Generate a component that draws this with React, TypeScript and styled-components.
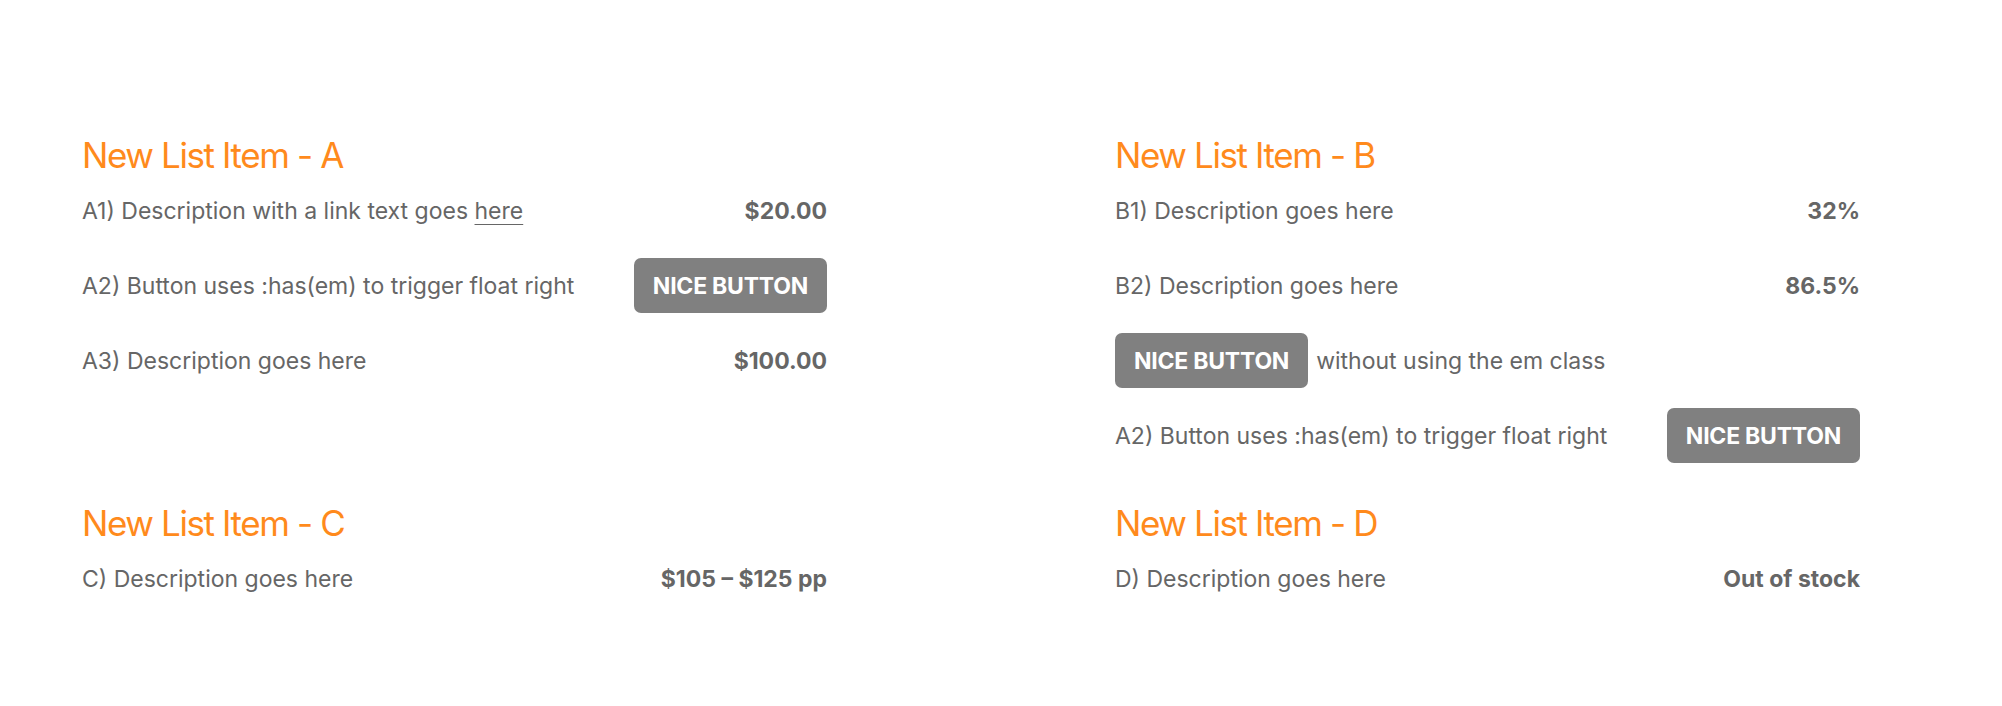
import React from 'react';
import styled, { createGlobalStyle } from 'styled-components';

const GlobalStyle = createGlobalStyle`
  html, body {
    margin: 0;
    padding: 0;
    background: #fff;
  }
  body {
    font-family: Inter, "Liberation Sans", sans-serif;
    color: #666;
  }
`;

const Page = styled.div`
  display: grid;
  grid-template-columns: 745px 745px;
  column-gap: 288px;
  row-gap: 32px;
  align-items: start;
  padding: 137px 0 0 82px;
`;

const Section = styled.section`
  display: flex;
  flex-direction: column;
`;

const Heading = styled.h2`
  margin: 0;
  font-size: 35px;
  line-height: 36px;
  font-weight: 400;
  letter-spacing: -0.04em;
  color: #ff8a1c;
`;

const Row = styled.div<{ $inline?: boolean }>`
  display: flex;
  align-items: center;
  justify-content: ${({ $inline }) => ($inline ? 'flex-start' : 'space-between')};
  gap: ${({ $inline }) => ($inline ? '8px' : '0')};
  height: 75px;
  font-size: 23px;
`;

const Desc = styled.span``;

const Value = styled.span`
  font-weight: 700;
`;

const Link = styled.a`
  color: inherit;
  text-decoration: underline;
  text-underline-offset: 5px;
  text-decoration-thickness: 1px;
`;

const Button = styled.button`
  height: 55px;
  padding: 0 19px;
  border: 0;
  border-radius: 7px;
  background: #808080;
  color: #fff;
  font-family: inherit;
  font-size: 23px;
  font-weight: 700;
  letter-spacing: -0.01em;
  cursor: pointer;
`;

const App: React.FC = () => {
  return (
    <>
      <GlobalStyle />
      <Page>
        <Section>
          <Heading>New List Item - A</Heading>
          <Row>
            <Desc>
              A1) Description with a link text goes <Link href="#">here</Link>
            </Desc>
            <Value>$20.00</Value>
          </Row>
          <Row>
            <Desc>A2) Button uses :has(em) to trigger float right</Desc>
            <Button>NICE BUTTON</Button>
          </Row>
          <Row>
            <Desc>A3) Description goes here</Desc>
            <Value>$100.00</Value>
          </Row>
        </Section>
        <Section>
          <Heading>New List Item - B</Heading>
          <Row>
            <Desc>B1) Description goes here</Desc>
            <Value>32%</Value>
          </Row>
          <Row>
            <Desc>B2) Description goes here</Desc>
            <Value>86.5%</Value>
          </Row>
          <Row $inline>
            <Button>NICE BUTTON</Button>
            <Desc>without using the em class</Desc>
          </Row>
          <Row>
            <Desc>A2) Button uses :has(em) to trigger float right</Desc>
            <Button>NICE BUTTON</Button>
          </Row>
        </Section>
        <Section>
          <Heading>New List Item - C</Heading>
          <Row>
            <Desc>C) Description goes here</Desc>
            <Value>$105 – $125 pp</Value>
          </Row>
        </Section>
        <Section>
          <Heading>New List Item - D</Heading>
          <Row>
            <Desc>D) Description goes here</Desc>
            <Value>Out of stock</Value>
          </Row>
        </Section>
      </Page>
    </>
  );
};

export default App;
